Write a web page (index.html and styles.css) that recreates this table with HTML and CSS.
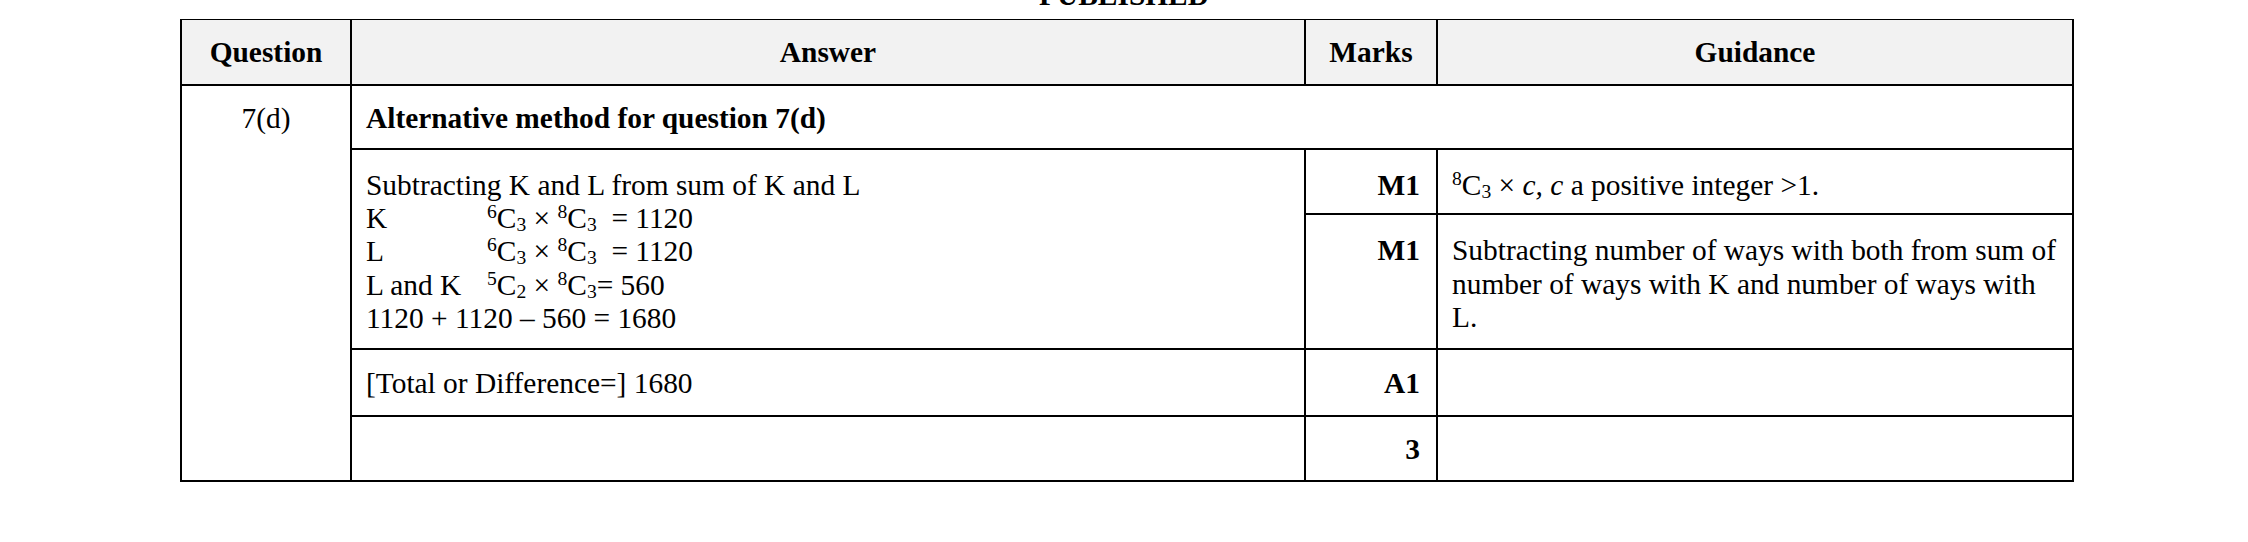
FILE: index.html
```html
<!DOCTYPE html>
<html lang="en">
<head>
<meta charset="utf-8">
<title>Mark scheme 7(d)</title>
<link rel="stylesheet" href="styles.css">
</head>
<body>
<p class="published">PUBLISHED</p>
<table class="mark-table">
  <colgroup>
    <col class="c-q">
    <col class="c-ans">
    <col class="c-mk">
    <col class="c-gd">
  </colgroup>
  <thead>
    <tr>
      <th>Question</th>
      <th>Answer</th>
      <th>Marks</th>
      <th>Guidance</th>
    </tr>
  </thead>
  <tbody>
    <tr class="r-alt">
      <td class="q" rowspan="5">7(d)</td>
      <td class="alt" colspan="3">Alternative method for question 7(d)</td>
    </tr>
    <tr class="r-m1a">
      <td class="ans" rowspan="2">
        <div>Subtracting K and L from sum of K and L</div>
        <div><span class="lbl">K</span><sup>6</sup>C<sub>3</sub> × <sup>8</sup>C<sub>3</sub> &nbsp;= 1120</div>
        <div><span class="lbl">L</span><sup>6</sup>C<sub>3</sub> × <sup>8</sup>C<sub>3</sub> &nbsp;= 1120</div>
        <div><span class="lbl">L and K</span><sup>5</sup>C<sub>2</sub> × <sup>8</sup>C<sub>3</sub>= 560</div>
        <div>1120 + 1120 – 560 = 1680</div>
      </td>
      <td class="mk">M1</td>
      <td class="gd"><sup>8</sup>C<sub>3</sub> × <i>c,</i> <i>c</i> a positive integer &gt;1.</td>
    </tr>
    <tr class="r-m1b">
      <td class="mk">M1</td>
      <td class="gd">Subtracting number of ways with both from sum of number of ways with K and number of ways with L.</td>
    </tr>
    <tr class="r-a1">
      <td class="ansline">[Total or Difference=] 1680</td>
      <td class="mk">A1</td>
      <td class="gd"></td>
    </tr>
    <tr class="r-tot">
      <td class="ansline"></td>
      <td class="mk">3</td>
      <td class="gd"></td>
    </tr>
  </tbody>
</table>
</body>
</html>
```

FILE: styles.css
```css
html, body {
  margin: 0;
  padding: 0;
  background: #ffffff;
}

body {
  font-family: "Liberation Serif", "Times New Roman", serif;
  font-size: 29.4px;
  line-height: 33.3px;
  color: #000000;
}

.published {
  margin: -21px 0 0;
  text-align: center;
  font-weight: bold;
}

.mark-table {
  border-collapse: collapse;
  table-layout: fixed;
  width: 1892px;
  margin: 7px 0 0 180px;
}

.c-q { width: 170px; }
.c-ans { width: 954px; }
.c-mk { width: 132px; }
.c-gd { width: 636px; }

.mark-table th,
.mark-table td {
  border: 2px solid #000000;
  padding: 15px 14px;
  vertical-align: top;
  text-align: left;
  font-weight: normal;
}

.mark-table th {
  background: #f2f2f2;
  font-weight: bold;
  text-align: center;
  border-top-width: 1px;
  padding-top: 16px;
  padding-bottom: 14px;
}

.mark-table td.q {
  text-align: center;
  padding-top: 16px;
}

.mark-table td.alt {
  font-weight: bold;
  padding-top: 16px;
  padding-bottom: 13px;
}

.mark-table td.mk {
  text-align: right;
  font-weight: bold;
  padding-right: 16px;
}

.mark-table td.gd {
  padding-left: 14px;
  padding-right: 12px;
}

.r-m1a td {
  padding-top: 19px;
  padding-bottom: 11px;
}

.r-m1b td {
  padding-top: 19px;
  padding-bottom: 14px;
}

.mark-table td.ans {
  padding-top: 19px;
  padding-bottom: 13px;
}

.r-a1 td {
  padding-top: 17px;
  padding-bottom: 14px;
}

.r-tot td {
  padding-top: 16px;
  padding-bottom: 14px;
}

.lbl {
  display: inline-block;
  width: 121px;
}

sup,
sub {
  font-size: 0.667em;
  line-height: 0;
}

sup {
  vertical-align: 0.52em;
}

sub {
  vertical-align: -0.17em;
}
```
